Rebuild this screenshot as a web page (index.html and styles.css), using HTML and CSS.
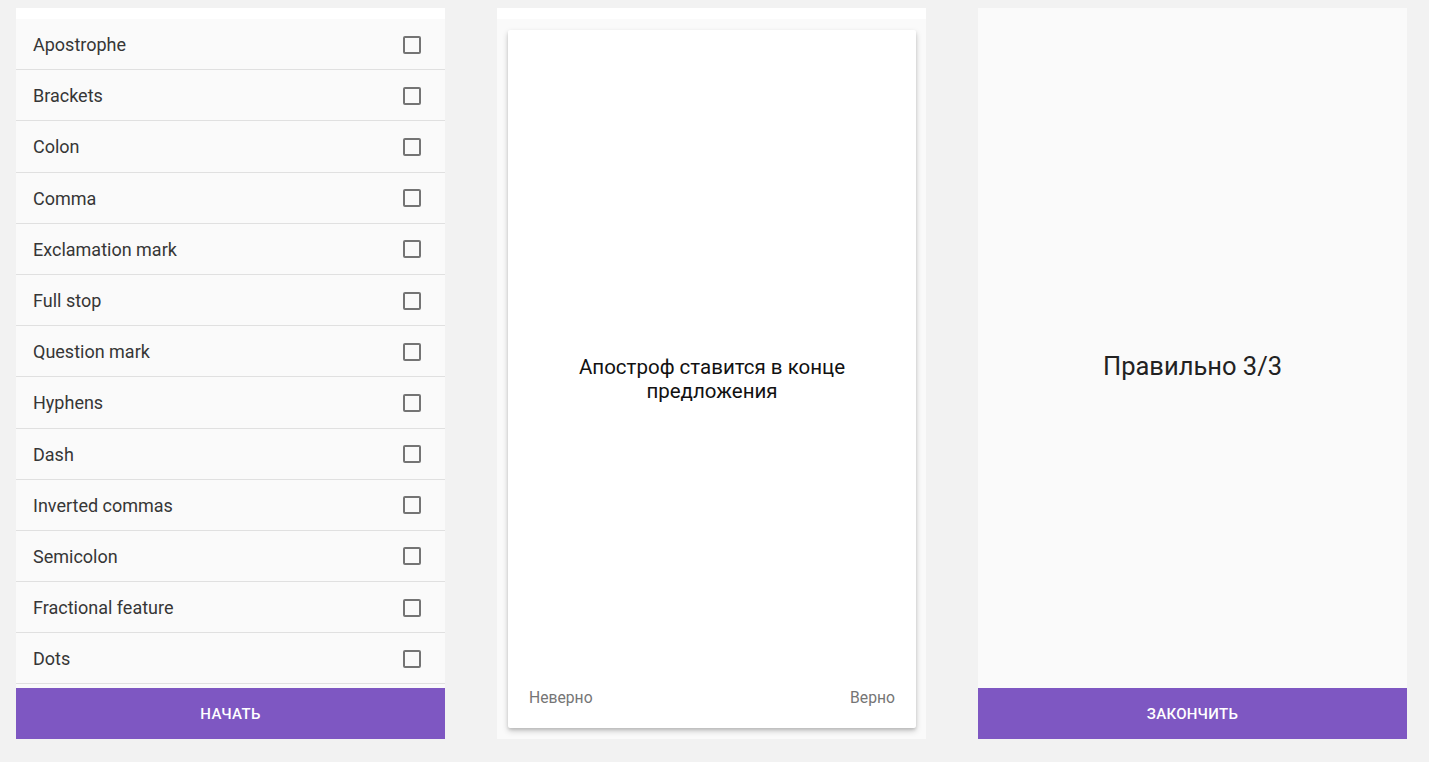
FILE: index.html
```html
<!DOCTYPE html>
<html lang="ru">
<head>
<meta charset="utf-8">
<title>Punctuation quiz</title>
<link rel="stylesheet" href="styles.css">
</head>
<body>
<main class="screens">
  <section class="panel panel-list">
    <div class="strip"></div>
    <ul class="topics">
      <li class="topic"><span>Apostrophe</span><span class="check"></span></li>
      <li class="topic"><span>Brackets</span><span class="check"></span></li>
      <li class="topic"><span>Colon</span><span class="check"></span></li>
      <li class="topic"><span>Comma</span><span class="check"></span></li>
      <li class="topic"><span>Exclamation mark</span><span class="check"></span></li>
      <li class="topic"><span>Full stop</span><span class="check"></span></li>
      <li class="topic"><span>Question mark</span><span class="check"></span></li>
      <li class="topic"><span>Hyphens</span><span class="check"></span></li>
      <li class="topic"><span>Dash</span><span class="check"></span></li>
      <li class="topic"><span>Inverted commas</span><span class="check"></span></li>
      <li class="topic"><span>Semicolon</span><span class="check"></span></li>
      <li class="topic"><span>Fractional feature</span><span class="check"></span></li>
      <li class="topic"><span>Dots</span><span class="check"></span></li>
    </ul>
    <div class="spacer"></div>
    <button class="action">Начать</button>
  </section>

  <section class="panel panel-card">
    <div class="strip"></div>
    <div class="card-wrap">
      <div class="card">
        <p class="question">Апостроф ставится в конце<br>предложения</p>
        <div class="answers">
          <span class="answer">Неверно</span>
          <span class="answer">Верно</span>
        </div>
      </div>
    </div>
  </section>

  <section class="panel panel-result">
    <div class="result"><p class="score">Правильно 3/3</p></div>
    <button class="action">Закончить</button>
  </section>
</main>
</body>
</html>
```

FILE: styles.css
```css
* { box-sizing: border-box; }
html, body { margin: 0; padding: 0; }
body {
  background: #f2f2f2;
  font-family: Roboto, "Liberation Sans", sans-serif;
  width: 1429px;
  height: 762px;
  overflow: hidden;
}
.screens {
  display: flex;
  gap: 52px;
  padding: 8px 0 0 16px;
}
.panel {
  width: 429px;
  height: 731px;
  background: #fafafa;
  display: flex;
  flex-direction: column;
}
.strip {
  height: 11px;
  background: #ffffff;
  flex: none;
}
.topics {
  list-style: none;
  margin: 0;
  padding: 0;
}
.topic {
  height: 51.2px;
  border-bottom: 1px solid #e0e0e0;
  display: flex;
  align-items: center;
  justify-content: space-between;
  padding: 1px 24px 0 17px;
  font-size: 18px;
  color: #363636;
}
.check {
  width: 18px;
  height: 18px;
  border: 2px solid #747474;
  border-radius: 2px;
}
.spacer { flex: 1; background: #fafafa; }
.action {
  flex: none;
  height: 51px;
  border: none;
  background: #7e57c2;
  color: #ffffff;
  font-family: Roboto, "Liberation Sans", sans-serif;
  font-size: 15px;
  font-weight: 500;
  text-transform: uppercase;
  letter-spacing: 0.3px;
  padding: 0;
  margin: 0;
  width: 100%;
}
.panel-card .card-wrap {
  flex: 1;
  padding: 11px 10px 11px 11px;
  display: flex;
}
.card {
  flex: 1;
  background: #ffffff;
  border-radius: 2px;
  box-shadow: 0 3px 6px rgba(0,0,0,0.18), 0 2px 3px rgba(0,0,0,0.12);
  display: flex;
  flex-direction: column;
  padding: 39px 21px 21px 21px;
}
.question {
  flex: 1;
  margin: 0;
  display: flex;
  align-items: center;
  justify-content: center;
  text-align: center;
  font-size: 20.5px;
  line-height: 24px;
  color: #111111;
}
.answers {
  display: flex;
  justify-content: space-between;
  font-size: 15.7px;
  color: #757575;
}
.result {
  flex: 1;
  display: flex;
  justify-content: center;
  padding-top: 343px;
}
.score {
  margin: 0;
  font-size: 25.5px;
  line-height: 30px;
  color: #222222;
}
```
